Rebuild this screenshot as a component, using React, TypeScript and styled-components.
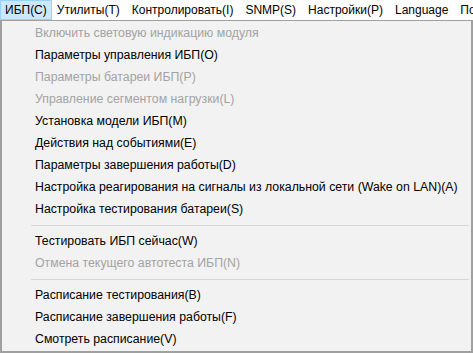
import React from "react";
import styled, { createGlobalStyle } from "styled-components";

const Global = createGlobalStyle`
  html, body { margin: 0; padding: 0; background: #ffffff; }
  body { font-family: "Liberation Sans", Arial, sans-serif; font-size: 12px; }
  * { box-sizing: border-box; }
`;

const Frame = styled.div`
  width: 473px;
  height: 353px;
  display: flex;
  flex-direction: column;
  overflow: hidden;
  background: #ffffff;
`;

const MenuBar = styled.div`
  height: 20px;
  display: flex;
  align-items: stretch;
  background: #ffffff;
  white-space: nowrap;
  flex-shrink: 0;
  overflow: hidden;
`;

const BarItem = styled.div<{ $active?: boolean }>`
  display: flex;
  align-items: center;
  padding: 0 ${(p) => (p.$active ? "4px" : "5px")};
  margin-right: ${(p) => (p.$active ? "-1px" : "0")};
  color: #000;
  font-size: 12px;
  border: 1px solid ${(p) => (p.$active ? "#99d1ff" : "transparent")};
  background: ${(p) => (p.$active ? "#cce8ff" : "transparent")};
  line-height: 1;
  flex-shrink: 0;
`;

const Dropdown = styled.div`
  width: 473px;
  height: 333px;
  background: #f2f2f2;
  border: 1px solid #a0a0a0;
  border-right-width: 2px;
  border-bottom-width: 2px;
  border-left-width: 2px;
  padding: 1px 0 1px 0;
  display: flex;
  flex-direction: column;
`;

const Item = styled.div<{ $disabled?: boolean }>`
  height: 22px;
  display: flex;
  align-items: center;
  padding-left: 33px;
  font-size: 12.3px;
  color: ${(p) => (p.$disabled ? "#a3a3a3" : "#000000")};
  white-space: nowrap;
`;

const Separator = styled.div`
  height: 10px;
  display: flex;
  align-items: center;
  padding-left: 29px;
  padding-right: 2px;
  &::after {
    content: "";
    flex: 1;
    height: 1px;
    background: #d7d7d7;
  }
`;

type Entry = { label: string; disabled?: boolean } | "sep";

const entries: Entry[] = [
  { label: "Включить световую индикацию модуля", disabled: true },
  { label: "Параметры управления ИБП(O)" },
  { label: "Параметры батареи ИБП(P)", disabled: true },
  { label: "Управление сегментом нагрузки(L)", disabled: true },
  { label: "Установка модели ИБП(M)" },
  { label: "Действия над событиями(E)" },
  { label: "Параметры завершения работы(D)" },
  { label: "Настройка реагирования на сигналы из локальной сети (Wake on LAN)(A)" },
  { label: "Настройка тестирования батареи(S)" },
  "sep",
  { label: "Тестировать ИБП сейчас(W)" },
  { label: "Отмена текущего автотеста ИБП(N)", disabled: true },
  "sep",
  { label: "Расписание тестирования(B)" },
  { label: "Расписание завершения работы(F)" },
  { label: "Смотреть расписание(V)" },
];

const bar = [
  "ИБП(C)",
  "Утилиты(T)",
  "Контролировать(I)",
  "SNMP(S)",
  "Настройки(P)",
  "Language",
  "Помощь(H)",
];

export default function App() {
  return (
    <Frame>
      <Global />
      <MenuBar>
        {bar.map((b, i) => (
          <BarItem key={b} $active={i === 0}>
            {b}
          </BarItem>
        ))}
      </MenuBar>
      <Dropdown>
        {entries.map((e, i) =>
          e === "sep" ? (
            <Separator key={i} />
          ) : (
            <Item key={i} $disabled={e.disabled}>
              {e.label}
            </Item>
          )
        )}
      </Dropdown>
    </Frame>
  );
}
